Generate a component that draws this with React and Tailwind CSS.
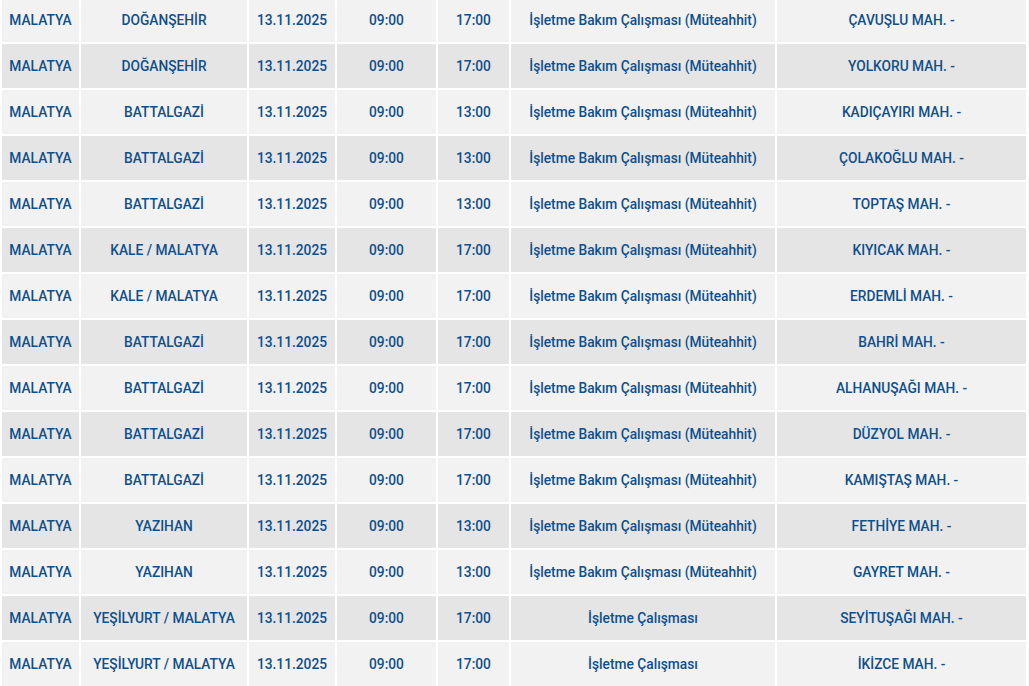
import React from "react";

const rows = [
  ["DOĞANŞEHİR", "17:00", "İşletme Bakım Çalışması (Müteahhit)", "ÇAVUŞLU MAH. -"],
  ["DOĞANŞEHİR", "17:00", "İşletme Bakım Çalışması (Müteahhit)", "YOLKORU MAH. -"],
  ["BATTALGAZİ", "13:00", "İşletme Bakım Çalışması (Müteahhit)", "KADIÇAYIRI MAH. -"],
  ["BATTALGAZİ", "13:00", "İşletme Bakım Çalışması (Müteahhit)", "ÇOLAKOĞLU MAH. -"],
  ["BATTALGAZİ", "13:00", "İşletme Bakım Çalışması (Müteahhit)", "TOPTAŞ MAH. -"],
  ["KALE / MALATYA", "17:00", "İşletme Bakım Çalışması (Müteahhit)", "KIYICAK MAH. -"],
  ["KALE / MALATYA", "17:00", "İşletme Bakım Çalışması (Müteahhit)", "ERDEMLİ MAH. -"],
  ["BATTALGAZİ", "17:00", "İşletme Bakım Çalışması (Müteahhit)", "BAHRİ MAH. -"],
  ["BATTALGAZİ", "17:00", "İşletme Bakım Çalışması (Müteahhit)", "ALHANUŞAĞI MAH. -"],
  ["BATTALGAZİ", "17:00", "İşletme Bakım Çalışması (Müteahhit)", "DÜZYOL MAH. -"],
  ["BATTALGAZİ", "17:00", "İşletme Bakım Çalışması (Müteahhit)", "KAMIŞTAŞ MAH. -"],
  ["YAZIHAN", "13:00", "İşletme Bakım Çalışması (Müteahhit)", "FETHİYE MAH. -"],
  ["YAZIHAN", "13:00", "İşletme Bakım Çalışması (Müteahhit)", "GAYRET MAH. -"],
  ["YEŞİLYURT / MALATYA", "17:00", "İşletme Çalışması", "SEYİTUŞAĞI MAH. -"],
  ["YEŞİLYURT / MALATYA", "17:00", "İşletme Çalışması", "İKİZCE MAH. -"],
];

export default function App() {
  return (
    <div className="w-[1029px] h-[686px] overflow-hidden bg-white font-['Roboto',sans-serif] text-[13.75px] font-medium text-[#0f4f8b]">
      <div className="-mt-[2px] pl-[2px] grid grid-cols-[77px_166px_86px_99px_71px_264px_249px] gap-[2px]">
        {rows.map((r, i) => {
          const bg = i % 2 === 0 ? "bg-[#f2f2f2]" : "bg-[#e5e5e5]";
          const cells = ["MALATYA", r[0], "13.11.2025", "09:00", r[1], r[2], r[3]];
          return cells.map((c, j) => (
            <div key={`${i}-${j}`} className={`${bg} h-[44px] flex items-center justify-center whitespace-nowrap`}>
              {c}
            </div>
          ));
        })}
      </div>
    </div>
  );
}
